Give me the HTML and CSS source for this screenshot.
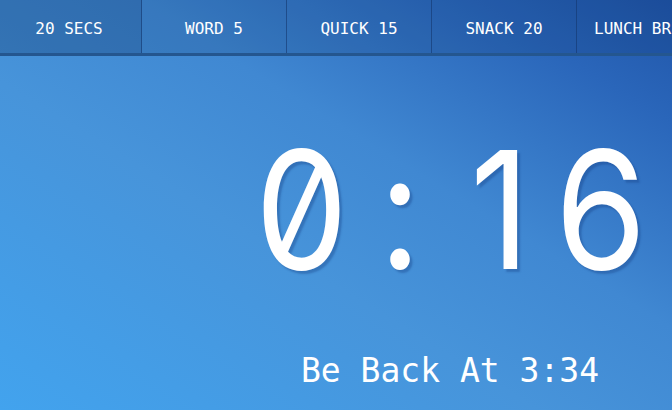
FILE: index.html
```html
<!DOCTYPE html>
<html>
<head>
<meta charset="utf-8">
<link rel="stylesheet" href="styles.css">
</head>
<body>
<div class="page">
  <nav class="tabs">
    <a class="tab tab-first is-active">20 SECS</a>
    <a class="tab">WORD 5</a>
    <a class="tab">QUICK 15</a>
    <a class="tab">SNACK 20</a>
    <a class="tab">LUNCH BREAK</a>
  </nav>
  <main class="main">
    <div class="timer"><span class="cell">0</span><span class="cell">:</span><span class="cell">1</span><span class="cell">6</span></div>
    <div class="back">Be Back At 3:34</div>
  </main>
</div>
</body>
</html>
```
FILE: styles.css
```css
html, body {
  margin: 0;
  padding: 0;
  width: 672px;
  height: 410px;
  overflow: hidden;
}
* {
  box-sizing: border-box;
}
body {
  font-family: "DejaVu Sans Mono", "Liberation Mono", monospace;
  color: #fff;
}
.page {
  width: 672px;
  height: 410px;
  background: linear-gradient(to top right, #42a3ee 0%, #4794da 40%, #4088d2 60%, #2a66ba 85%, #2055a8 100%);
  display: flex;
  flex-direction: column;
  overflow: hidden;
}
.tabs {
  display: flex;
  height: 56px;
  background: rgba(0, 25, 70, 0.14);
  border-bottom: 3px solid #24568f;
  flex-shrink: 0;
}
.tab {
  flex: 0 0 145px;
  border-right: 1px solid rgba(20, 55, 110, 0.6);
  display: flex;
  align-items: center;
  justify-content: center;
  padding-top: 3px;
  font-size: 16px;
  white-space: nowrap;
  overflow: hidden;
}
.tab-first {
  flex-basis: 142px;
  padding-right: 3px;
}
.tab.is-active {
  background: rgba(0, 25, 70, 0.12);
}
.tab:last-child {
  justify-content: flex-start;
  padding-left: 17px;
}
.main {
  display: flex;
  flex-direction: column;
  align-items: center;
  padding-left: 228px;
}
.timer {
  display: flex;
  font-family: "Inter", "DejaVu Sans", sans-serif;
  font-feature-settings: "zero" 1;
  font-size: 164px;
  line-height: 1;
  margin-top: 72px;
  text-shadow: 3px 3px 2px rgba(20, 60, 130, 0.35);
}
.cell {
  width: 100px;
  text-align: center;
  transform: scaleX(0.9);
}
.back {
  font-size: 33px;
  line-height: 1;
  margin-top: 62px;
}
```
